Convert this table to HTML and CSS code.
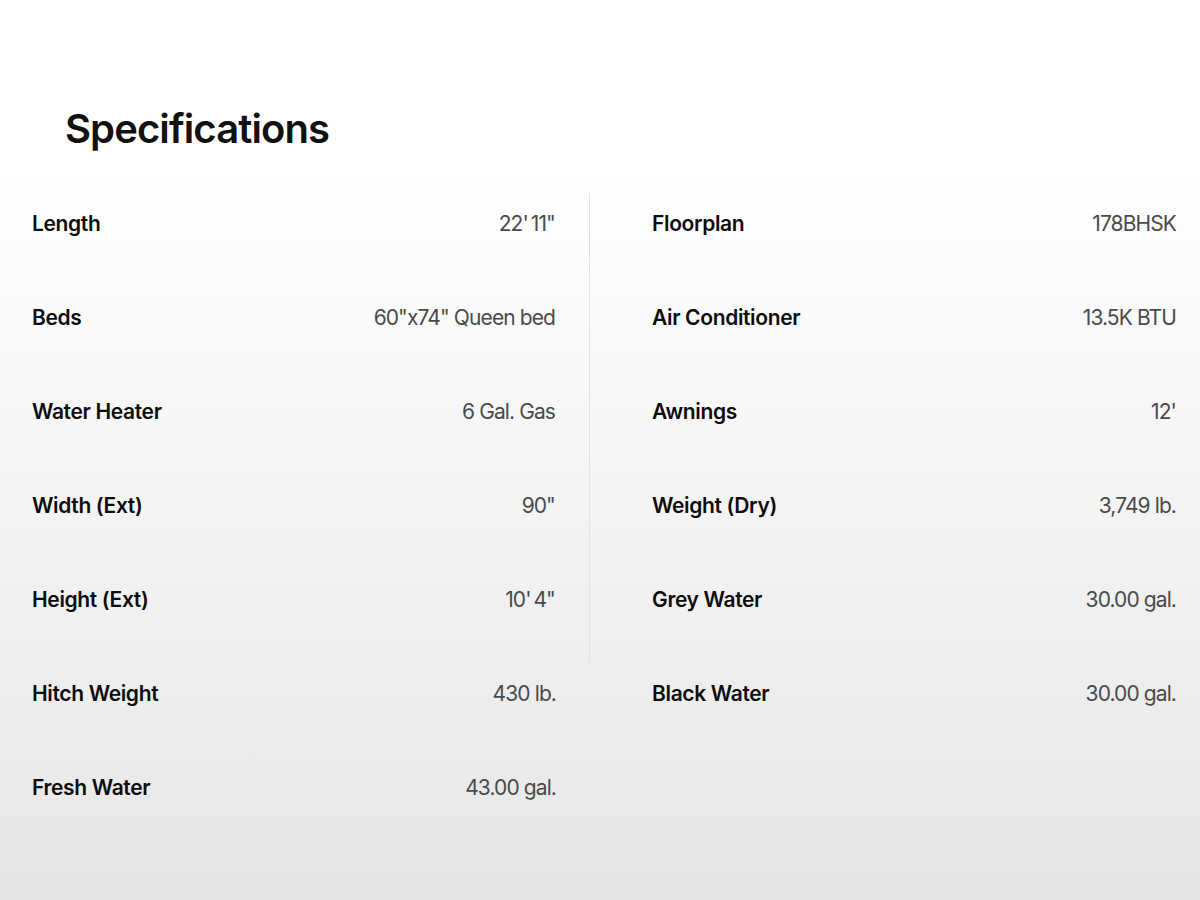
FILE: index.html
```html
<!DOCTYPE html>
<html>
<head>
<meta charset="utf-8">
<link rel="stylesheet" href="styles.css">
</head>
<body>
<main class="page">
  <h2 class="title">Specifications</h2>
  <section class="specs">
    <div class="col col-left">
      <div class="row divided"><span class="label">Length</span><span class="value">22'<span class="tight"> </span>11"</span></div>
      <div class="row divided"><span class="label">Beds</span><span class="value">60"x74" Queen bed</span></div>
      <div class="row divided"><span class="label">Water Heater</span><span class="value">6 Gal. Gas</span></div>
      <div class="row divided"><span class="label">Width (Ext)</span><span class="value">90"</span></div>
      <div class="row divided"><span class="label">Height (Ext)</span><span class="value">10'<span class="tight"> </span>4"</span></div>
      <div class="row"><span class="label">Hitch Weight</span><span class="value">430 lb.</span></div>
      <div class="row"><span class="label">Fresh Water</span><span class="value">43.00 gal.</span></div>
    </div>
    <div class="col col-right">
      <div class="row"><span class="label">Floorplan</span><span class="value">178BHSK</span></div>
      <div class="row"><span class="label">Air Conditioner</span><span class="value">13.5K BTU</span></div>
      <div class="row"><span class="label">Awnings</span><span class="value">12'</span></div>
      <div class="row"><span class="label">Weight (Dry)</span><span class="value">3,749 lb.</span></div>
      <div class="row"><span class="label">Grey Water</span><span class="value">30.00 gal.</span></div>
      <div class="row"><span class="label">Black Water</span><span class="value">30.00 gal.</span></div>
    </div>
  </section>
</main>
</body>
</html>
```
FILE: styles.css
```css
html, body {
  margin: 0;
  padding: 0;
}
body {
  background: #ffffff;
  font-family: Inter, "Liberation Sans", sans-serif;
  color: #111;
}
.page {
  min-height: 900px;
  background: linear-gradient(to bottom, #ffffff 0px, #ffffff 180px, #e6e6e6 900px);
}
.title {
  margin: 0;
  padding: 105px 0 0 65px;
  font-size: 40px;
  line-height: 48px;
  font-weight: 600;
  letter-spacing: -0.9px;
  color: #111;
  box-sizing: border-box;
  height: 193px;
}
.specs {
  display: flex;
}
.col-left {
  width: 590px;
}
.col-right {
  width: 610px;
}
.row {
  height: 94px;
  display: flex;
  justify-content: space-between;
  align-items: flex-start;
  box-sizing: border-box;
  padding-top: 18px;
}
.col-left .row {
  padding-left: 32px;
  padding-right: 34px;
}
.col-right .row {
  padding-left: 62px;
  padding-right: 24px;
}
.divided {
  border-right: 1px solid #e2e2e2;
}
.label {
  font-size: 21px;
  line-height: 26px;
  font-weight: 600;
  letter-spacing: -0.35px;
  color: #0d0d0d;
}
.value {
  font-size: 21px;
  line-height: 26px;
  font-weight: 400;
  letter-spacing: -0.9px;
  color: #4a4a4a;
}
.tight {
  letter-spacing: -3px;
}
```
